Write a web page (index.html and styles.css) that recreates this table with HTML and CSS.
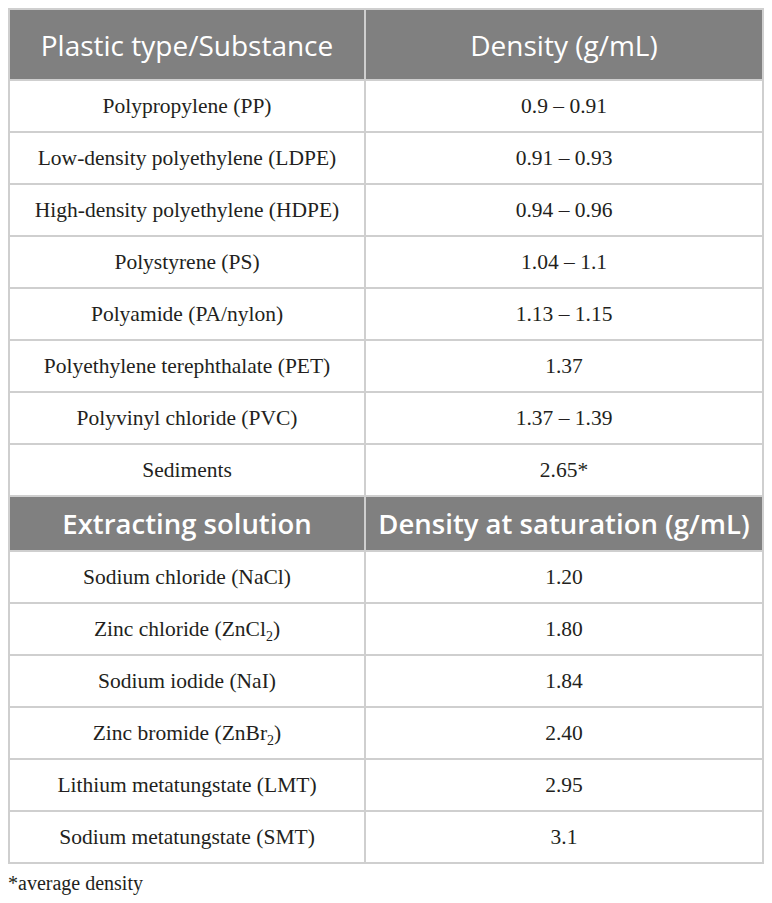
FILE: index.html
```html
<!DOCTYPE html>
<html lang="en">
<head>
  <meta charset="UTF-8">
  <meta name="viewport" content="width=device-width, initial-scale=1.0">
  <title>Plastic density</title>
  <link rel="stylesheet" href="styles.css">
</head>
<body>
  <table class="density">
    <thead>
      <tr class="head">
        <th>Plastic type/Substance</th>
        <th>Density (g/mL)</th>
      </tr>
    </thead>
    <tbody>
      <tr><td>Polypropylene (PP)</td><td>0.9 – 0.91</td></tr>
      <tr><td>Low-density polyethylene (LDPE)</td><td>0.91 – 0.93</td></tr>
      <tr><td>High-density polyethylene (HDPE)</td><td>0.94 – 0.96</td></tr>
      <tr><td>Polystyrene (PS)</td><td>1.04 – 1.1</td></tr>
      <tr><td>Polyamide (PA/nylon)</td><td>1.13 – 1.15</td></tr>
      <tr><td>Polyethylene terephthalate (PET)</td><td>1.37</td></tr>
      <tr><td>Polyvinyl chloride (PVC)</td><td>1.37 – 1.39</td></tr>
      <tr><td>Sediments</td><td>2.65*</td></tr>
      <tr class="head head-bold">
        <th>Extracting solution</th>
        <th>Density at saturation (g/mL)</th>
      </tr>
      <tr><td>Sodium chloride (NaCl)</td><td>1.20</td></tr>
      <tr><td>Zinc chloride (ZnCl<sub>2</sub>)</td><td>1.80</td></tr>
      <tr><td>Sodium iodide (NaI)</td><td>1.84</td></tr>
      <tr><td>Zinc bromide (ZnBr<sub>2</sub>)</td><td>2.40</td></tr>
      <tr><td>Lithium metatungstate (LMT)</td><td>2.95</td></tr>
      <tr><td>Sodium metatungstate (SMT)</td><td>3.1</td></tr>
    </tbody>
  </table>
  <p class="note">*average density</p>
</body>
</html>
```

FILE: styles.css
```css
html, body {
  margin: 0;
  padding: 0;
  background: #fff;
}
body {
  padding: 8px 8px 0;
  font-family: "Liberation Serif", serif;
  color: #231f20;
}
.density {
  width: 756px;
  border-collapse: collapse;
  table-layout: fixed;
}
.density th,
.density td {
  border: 2px solid #cfcfcf;
  text-align: center;
  padding: 0;
}
.density th:first-child,
.density td:first-child {
  width: 354px;
}
.density td {
  height: 50px;
  font-size: 21.5px;
}
.head th {
  background: #808080;
  color: #fff;
  font-family: "Open Sans", sans-serif;
  font-weight: 400;
  font-size: 28px;
  height: 69px;
}
.head-bold th {
  font-weight: 600;
  font-size: 27.5px;
  height: 53px;
}
sub {
  font-size: 14px;
  line-height: 0;
}
.note {
  margin: 8px 0 0;
  font-size: 20px;
}
```
